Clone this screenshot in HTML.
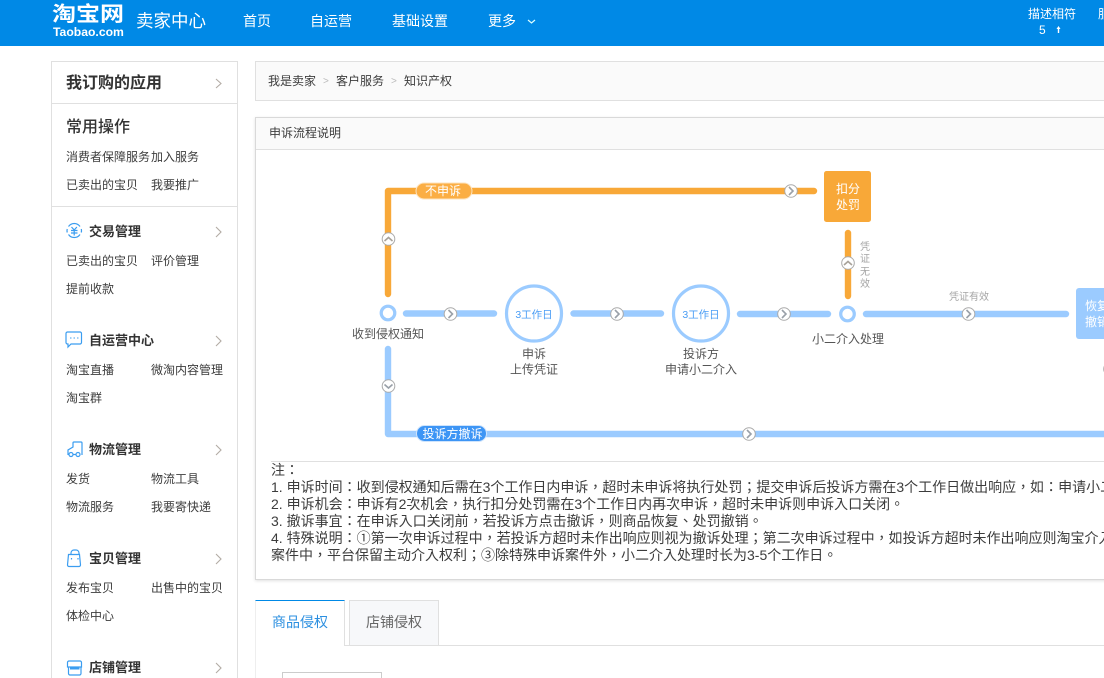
<!DOCTYPE html>
<html lang="zh"><head><meta charset="utf-8">
<style>
html,body{margin:0;padding:0;width:1104px;height:678px;overflow:hidden;background:#fff}
body{position:relative;font-family:"Liberation Sans","Noto Sans CJK SC",sans-serif;font-size:12px;color:#3c3c3c}
.a{position:absolute;white-space:nowrap}
.t{position:absolute;white-space:nowrap;line-height:20px;height:20px}
.b{position:absolute;box-sizing:border-box}
.h{font-size:13px;font-weight:bold;color:#333}
svg{position:absolute;overflow:visible}
svg text{font-family:"Liberation Sans","Noto Sans CJK SC",sans-serif}
.n{color:#fff;font-size:14px}
.note{position:absolute;left:271px;white-space:nowrap;font-family:"Liberation Sans","Noto Sans CJK TC",sans-serif;font-size:14px;line-height:17px;height:17px;color:#3c3c3c}
</style></head><body>
<div class="b" style="left:0;top:0;width:1104px;height:46px;background:#0089e6"></div>
<div class="a" style="left:52px;top:1px;font-size:24px;line-height:28px;font-weight:bold;color:#fff;transform:scaleY(.85);transform-origin:50% 50%">淘宝网</div>
<div class="a" style="left:53px;top:25px;font-size:12.200px;line-height:14px;font-weight:bold;color:#fff">Taobao.com</div>
<div class="a" style="left:136px;top:9px;font-size:17.500px;line-height:24px;color:#fff">卖家中心</div>
<div class="t n" style="left:243px;top:11px">首页</div>
<div class="t n" style="left:310px;top:11px">自运营</div>
<div class="t n" style="left:392px;top:11px">基础设置</div>
<div class="t n" style="left:488px;top:11px">更多</div>
<svg style="left:0;top:0" width="1104" height="46"><path d="M528 20l3.500 3 3.500-3" fill="none" stroke="#dff" stroke-width="1.200"/></svg>
<div class="t" style="left:1028px;top:4px;color:#fff">描述相符</div>
<div class="t" style="left:1039px;top:20px;color:#fff;font-size:12px">5</div>
<svg style="left:0;top:0" width="1104" height="46"><path d="M1058.500 26l-2 3h1.300v4h1.400v-4h1.300z" fill="#fff"/></svg>
<div class="t" style="left:1098px;top:4px;color:#fff">服</div>

<!-- sidebar -->
<div class="b" style="left:51px;top:61px;width:187px;height:640px;border:1px solid #e0e0e0"></div>
<div class="b" style="left:52px;top:103px;width:185px;height:1px;background:#e0e0e0"></div>
<div class="b" style="left:52px;top:206px;width:185px;height:1px;background:#e0e0e0"></div>
<div class="t" style="left:66px;top:74px;font-size:16px;font-weight:bold;color:#333">我订购的应用</div>
<div class="t" style="left:66px;top:118px;font-size:16px;color:#333;font-weight:500">常用操作</div>
<div class="t" style="left:66px;top:147px">消费者保障服务</div><div class="t" style="left:151px;top:147px">加入服务</div>
<div class="t" style="left:66px;top:175px">已卖出的宝贝</div><div class="t" style="left:151px;top:175px">我要推广</div>

<div class="t h" style="left:89px;top:222px">交易管理</div>
<div class="t" style="left:66px;top:251px">已卖出的宝贝</div><div class="t" style="left:151px;top:251px">评价管理</div>
<div class="t" style="left:66px;top:279px">提前收款</div>

<div class="t h" style="left:89px;top:331px">自运营中心</div>
<div class="t" style="left:66px;top:360px">淘宝直播</div><div class="t" style="left:151px;top:360px">微淘内容管理</div>
<div class="t" style="left:66px;top:388px">淘宝群</div>

<div class="t h" style="left:89px;top:440px">物流管理</div>
<div class="t" style="left:66px;top:469px">发货</div><div class="t" style="left:151px;top:469px">物流工具</div>
<div class="t" style="left:66px;top:497px">物流服务</div><div class="t" style="left:151px;top:497px">我要寄快递</div>

<div class="t h" style="left:89px;top:549px">宝贝管理</div>
<div class="t" style="left:66px;top:578px">发布宝贝</div><div class="t" style="left:151px;top:578px">出售中的宝贝</div>
<div class="t" style="left:66px;top:606px">体检中心</div>

<div class="t h" style="left:89px;top:658px">店铺管理</div>

<svg style="left:0;top:0" width="1104" height="678" fill="none">
<g stroke="#b3aca5" stroke-width="1.100">
<path d="M216 79l5 4.500-5 4.500"/><path d="M216 227l5 5-5 5"/><path d="M216 336l5 5-5 5"/><path d="M216 445l5 5-5 5"/><path d="M216 554l5 5-5 5"/><path d="M216 663l5 5-5 5"/>
</g>
<g stroke="#3b9df0" stroke-width="1.200">
<path d="M68.500 226.500a7 7 0 0 1 11.500 0M80 234.500a7 7 0 0 1-11.500 0M67.200 229a7.500 7.500 0 0 0 0 3.500M81.300 229a7.500 7.500 0 0 1 0 3.500"/>
<path d="M71.500 227l2.700 3 2.700-3M71 230.500h6.500M71 233h6.500M74.200 230.500v5"/>
<path d="M67.500 332h12.500a1.500 1.500 0 0 1 1.500 1.500v9a1.500 1.500 0 0 1-1.500 1.500h-9l-3 3v-3h-.5a1.500 1.500 0 0 1-1.500-1.500v-9a1.500 1.500 0 0 1 1.500-1.500z"/>
<path d="M70 338h1.500M73.500 338h1.500M77 338h1.500" stroke="#6ab4f2"/>
<path d="M68 455v-5l5-3v-4a1 1 0 0 1 1-1h7a1 1 0 0 1 1 1v12"/><path d="M73 454.500h3"/>
<circle cx="71" cy="454.500" r="2"/><circle cx="78" cy="454.500" r="2"/>
<path d="M68.500 554.500h11l1 10.500a1.500 1.500 0 0 1-1.500 1.500H69a1.500 1.500 0 0 1-1.500-1.500z"/><path d="M71 554.500v-1.500a3 3 0 0 1 3-3h2a3 3 0 0 1 3 3v1.500"/>
<path d="M71.500 558v1.500M78 558v1.500"/>
<path d="M69 661h11a1.500 1.500 0 0 1 1.500 1.500v4.500H67.500v-4.500a1.500 1.500 0 0 1 1.500-1.500zM68.500 667v6.500a1.500 1.500 0 0 0 1.500 1.500h9.500a1.500 1.500 0 0 0 1.500-1.500V667"/>
<path d="M70 668.500h9.500" stroke-width="2"/>
</g>
</svg>

<!-- breadcrumb -->
<div class="b" style="left:255px;top:61px;width:900px;height:40px;background:#fafafa;border:1px solid #e0e0e0"></div>
<div class="t" style="left:268px;top:71px">我是卖家</div>
<div class="t" style="left:323px;top:72px;color:#bbb;font-size:10px">&gt;</div>
<div class="t" style="left:336px;top:71px">客户服务</div>
<div class="t" style="left:391px;top:72px;color:#bbb;font-size:10px">&gt;</div>
<div class="t" style="left:404px;top:71px">知识产权</div>

<!-- panel -->
<div class="b" style="left:255px;top:117px;width:900px;height:463px;border:1px solid #d9d9d9;box-shadow:0 1px 3px rgba(0,0,0,.12)"></div>
<div class="b" style="left:256px;top:118px;width:900px;height:32px;background:#fafafa;border-bottom:1px solid #e0e0e0"></div>
<div class="t" style="left:269px;top:123px">申诉流程说明</div>

<svg style="left:0;top:0" width="1104" height="678" fill="none">
<g stroke="#f8a838" stroke-width="6.400" stroke-linecap="round" stroke-linejoin="round">
<path d="M388 294V191H814"/>
<path d="M848 233V296"/>
</g>
<g stroke="#9bcbff" stroke-width="6.400" stroke-linecap="round" stroke-linejoin="round">
<path d="M406 313.500H494"/><path d="M573.500 313.500H661"/><path d="M740 314H828"/><path d="M866 314H1066"/>
<path d="M388 349V434H1110"/>
</g>
<circle cx="388" cy="313" r="6.800" stroke="#9bcbff" stroke-width="3.200" fill="#fff"/>
<circle cx="847.500" cy="314" r="6.800" stroke="#9bcbff" stroke-width="3.200" fill="#fff"/>
<circle cx="534" cy="313.500" r="27.500" stroke="#9bcbff" stroke-width="3.200" fill="#fff"/>
<circle cx="701" cy="313.500" r="27.500" stroke="#9bcbff" stroke-width="3.200" fill="#fff"/>
<rect x="416" y="183" width="56" height="16" rx="8" fill="#fbae44" stroke="#fde3bd"/>
<rect x="416.500" y="425.500" width="70" height="16" rx="8" fill="#3d95f5" stroke="#cfe4fc"/>
<rect x="824" y="171" width="47" height="51" rx="2.500" fill="#f8a838"/>
<rect x="1076" y="288" width="60" height="51" rx="3" fill="#9bcbff"/>
<g fill="#fff" stroke="#aaa" stroke-width="1">
<circle cx="388.500" cy="239" r="6.300"/><circle cx="388.500" cy="386" r="6.300"/>
<circle cx="450.500" cy="314" r="6.300"/><circle cx="617" cy="314" r="6.300"/>
<circle cx="784" cy="314" r="6.300"/><circle cx="968.500" cy="314" r="6.300"/>
<circle cx="791" cy="191" r="6.300"/><circle cx="848" cy="263" r="6.300"/>
<circle cx="749" cy="434" r="6.300"/><circle cx="1110" cy="369" r="6.300"/>
</g>
<g stroke="#a8a29a" stroke-width="1.600">
<path d="M384.500 241l4-3.500 4 3.500"/><path d="M844 265l4-3.500 4 3.500"/>
</g>
<g stroke="#99a0a8" stroke-width="1.600">
<path d="M384.500 384.500l4 3.500 4-3.500"/>
<path d="M448.500 310l4 4-4 4"/><path d="M615 310l4 4-4 4"/><path d="M782 310l4 4-4 4"/><path d="M966.500 310l4 4-4 4"/><path d="M789 187l4 4-4 4"/><path d="M747 430l4 4-4 4"/>
</g>
<g font-size="12" text-anchor="middle">
<text x="443" y="195" fill="#fff">不申诉</text>
<text x="452.500" y="438" fill="#fff" font-size="12">投诉方撤诉</text>
<text x="534" y="318" fill="#4a9df5" font-size="10.500">3工作日</text>
<text x="701" y="318" fill="#4a9df5" font-size="10.500">3工作日</text>
<text x="848" y="193" fill="#fff">扣分</text>
<text x="848" y="209" fill="#fff">处罚</text>
<text x="1097" y="310" fill="#fff">恢复</text>
<text x="1097" y="326" fill="#fff">撤销</text>
<text x="388" y="338" fill="#555">收到侵权通知</text>
<text x="534" y="358" fill="#555">申诉</text>
<text x="534" y="373.500" fill="#555">上传凭证</text>
<text x="701" y="358" fill="#555">投诉方</text>
<text x="701" y="373.500" fill="#555">申请小二介入</text>
<text x="848" y="343" fill="#555">小二介入处理</text>
</g>
<g font-size="10" text-anchor="middle" fill="#a5a5a5">
<text x="969" y="300">凭证有效</text>
<text x="865" y="250">凭</text><text x="865" y="262">证</text><text x="865" y="275">无</text><text x="865" y="287">效</text>
</g>
</svg>

<!-- notes -->
<div class="b" style="left:271px;top:461px;width:840px;height:1px;background:#e0e0e0"></div>
<div class="note" lang="zh-Hant" style="top:462px">注：</div>
<div class="note" lang="zh-Hant" style="top:479px">1. 申诉时间：收到侵权通知后需在3个工作日内申诉，超时未申诉将执行处罚；提交申诉后投诉方需在3个工作日做出响应，如：申请小二介入</div>
<div class="note" lang="zh-Hant" style="top:496px">2. 申诉机会：申诉有2次机会，执行扣分处罚需在3个工作日内再次申诉，超时未申诉则申诉入口关闭。</div>
<div class="note" lang="zh-Hant" style="top:513px">3. 撤诉事宜：在申诉入口关闭前，若投诉方点击撤诉，则商品恢复、处罚撤销。</div>
<div class="note" lang="zh-Hant" style="top:530px">4. 特殊说明：①第一次申诉过程中，若投诉方超时未作出响应则视为撤诉处理；第二次申诉过程中，如投诉方超时未作出响应则淘宝介入</div>
<div class="note" lang="zh-Hant" style="top:547px">案件中，平台保留主动介入权利；③除特殊申诉案件外，小二介入处理时长为3-5个工作日。</div>

<!-- tabs -->
<div class="b" style="left:255px;top:645px;width:900px;height:1px;background:#e0e0e0"></div>
<div class="b" style="left:255px;top:645px;width:1px;height:40px;background:#eee"></div>
<div class="b" style="left:255px;top:600px;width:90px;height:46px;background:#fff;border-top:1px solid #0089e6;border-right:1px solid #e0e0e0;border-left:1px solid #eee"></div>
<div class="t" style="left:272px;top:612px;font-size:14px;color:#2b8fe0">商品侵权</div>
<div class="b" style="left:349px;top:600px;width:90px;height:46px;background:#f7f8fa;border:1px solid #e0e0e0"></div>
<div class="t" style="left:366px;top:612px;font-size:14px;color:#666">店铺侵权</div>
<div class="b" style="left:282px;top:672px;width:100px;height:20px;border:1px solid #ccc"></div>
</body></html>
